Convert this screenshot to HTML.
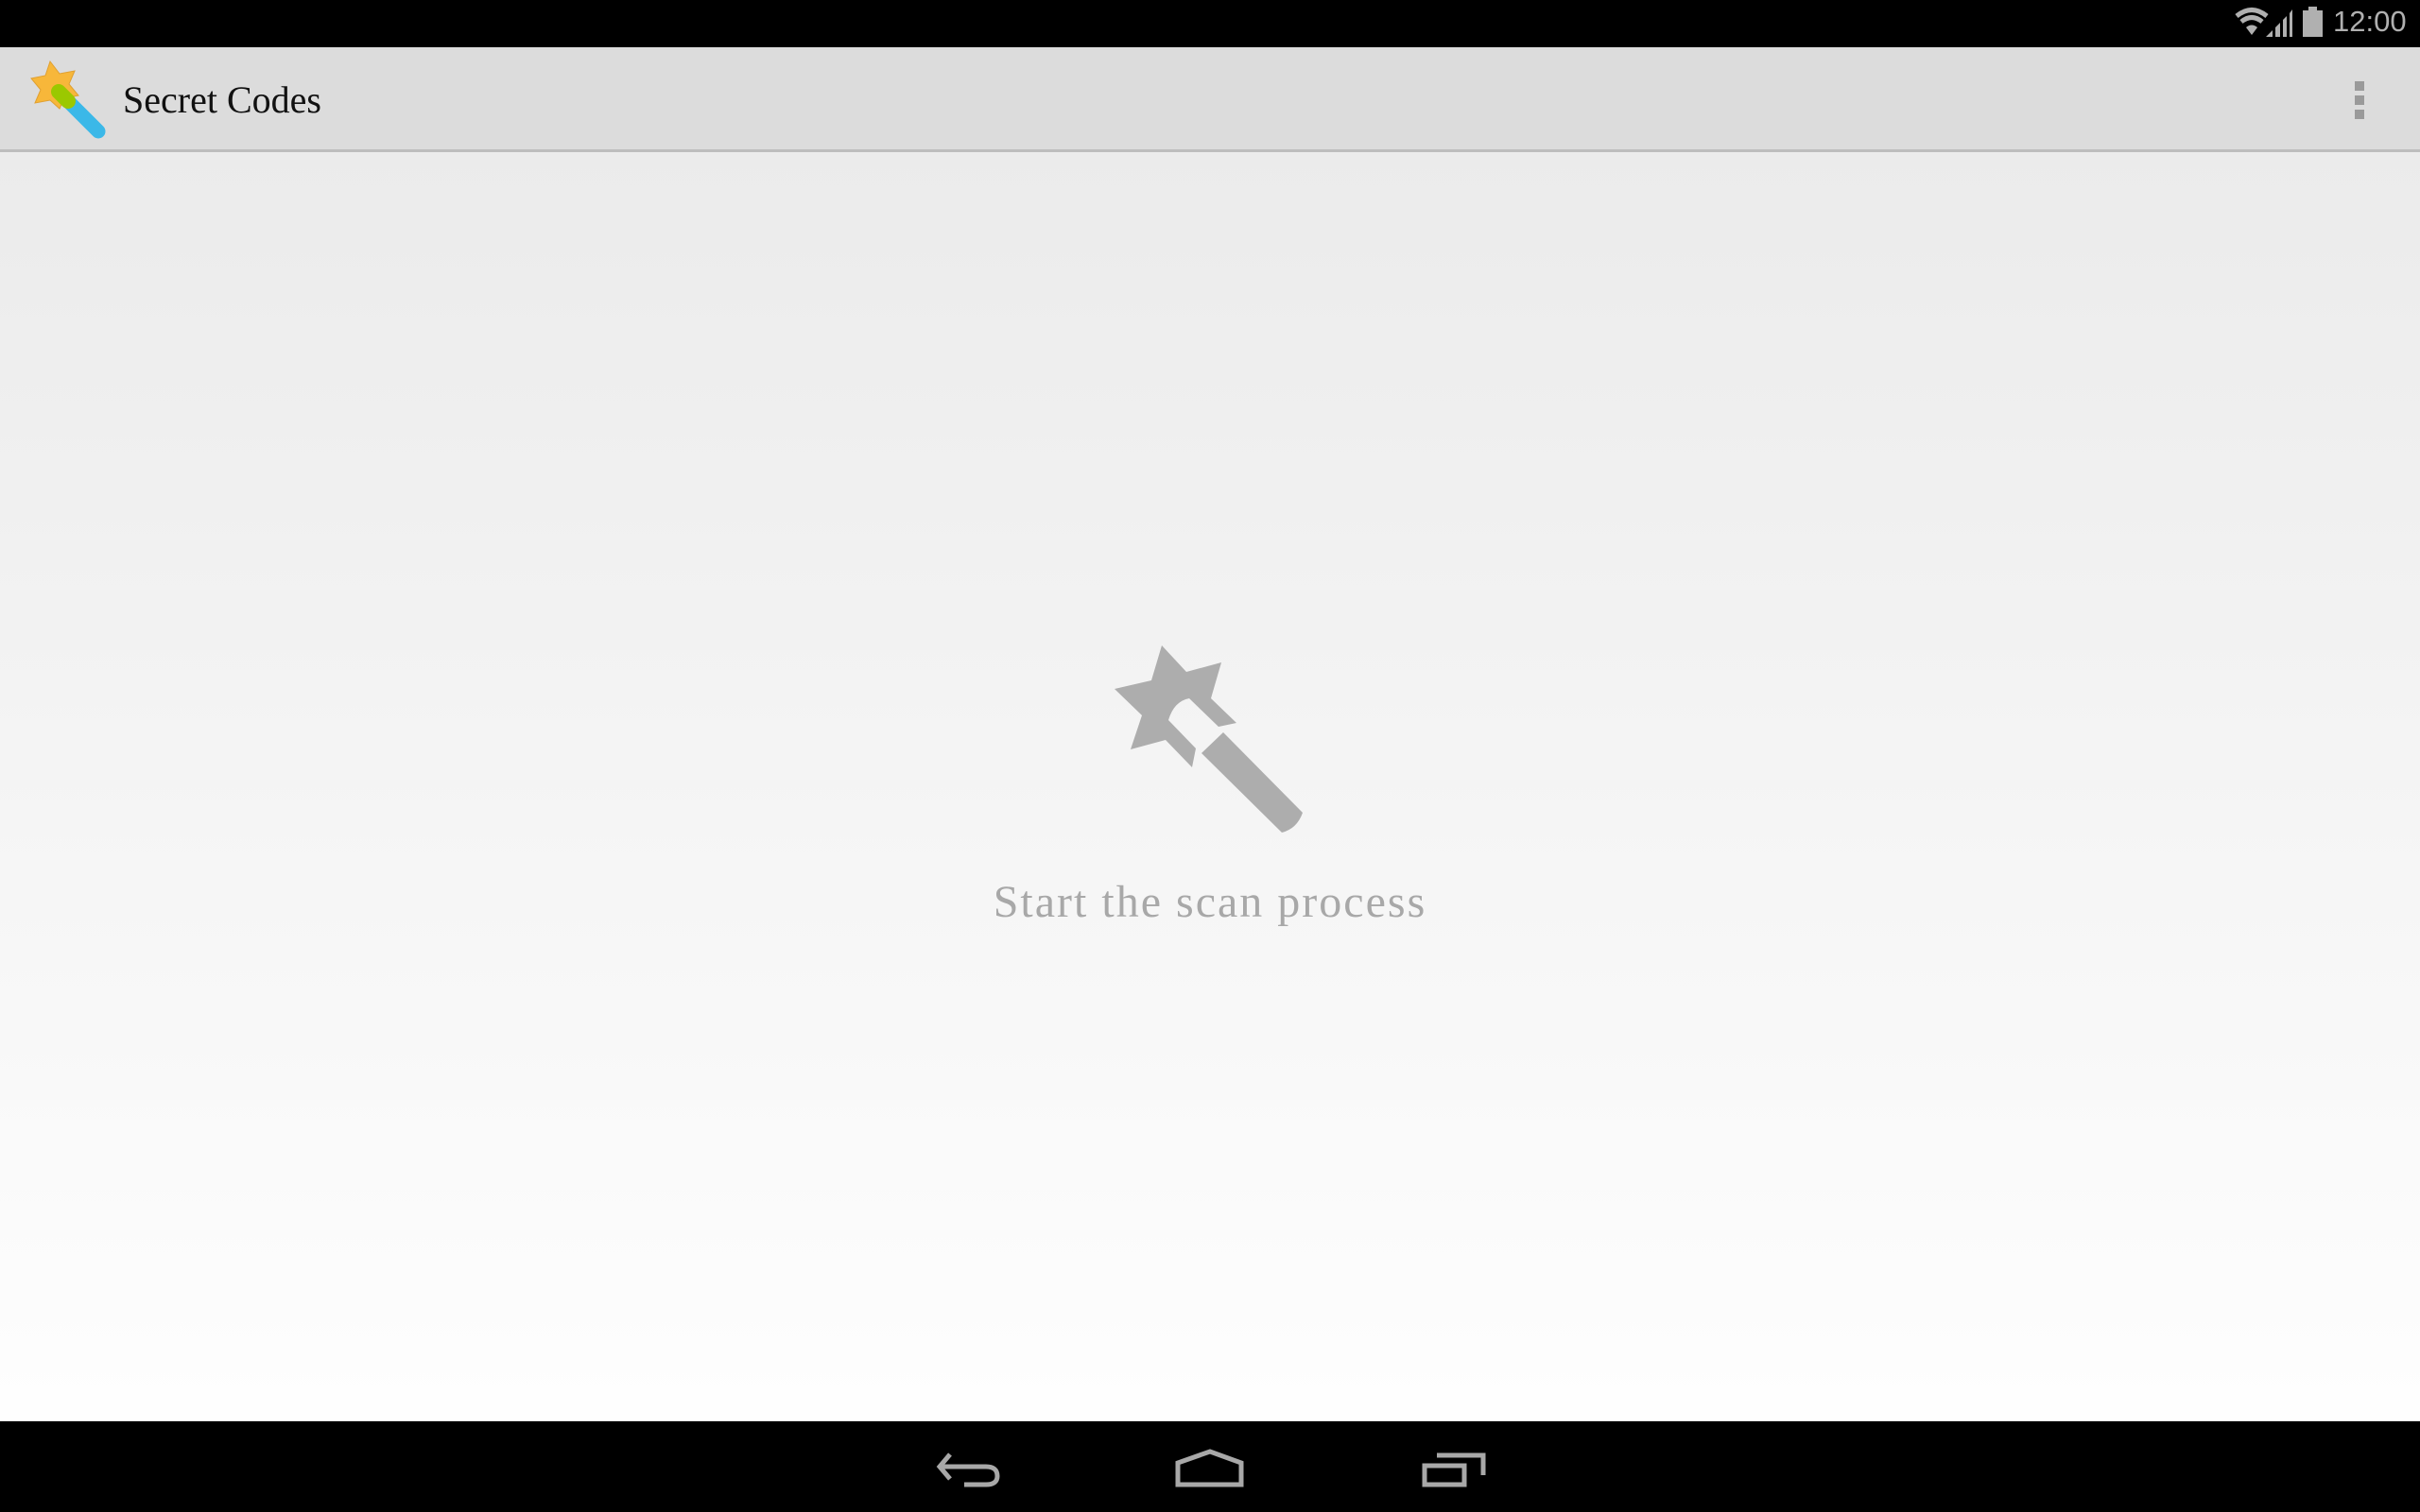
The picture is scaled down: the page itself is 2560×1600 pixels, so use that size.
<!DOCTYPE html>
<html><head><meta charset="utf-8"><style>
html,body{margin:0;padding:0;width:2560px;height:1600px;overflow:hidden;font-family:"Liberation Serif",serif}
#sb{position:absolute;left:0;top:0;width:2560px;height:50px;background:#000}
#ab{position:absolute;left:0;top:50px;width:2560px;height:111px;background:#dcdcdc;border-bottom:3px solid #bdbdbd;box-sizing:border-box}
#main{position:absolute;left:0;top:161px;width:2560px;height:1343px;background:linear-gradient(#ebebeb,#fefefe)}
#nb{position:absolute;left:0;top:1504px;width:2560px;height:96px;background:#000}
.t{position:absolute;left:130px;top:80px;font-size:40px;color:#111;line-height:50px}
.msg{position:absolute;left:0;width:2560px;top:927px;text-align:center;font-size:48px;letter-spacing:2px;color:#a8a8a8}
.clk{position:absolute;left:2468px;top:5px;font-family:"Liberation Sans",sans-serif;font-size:31px;color:#b0b0b0}
</style></head><body>
<div id="sb">
<svg width="2560" height="50" style="position:absolute;left:0;top:0">
<g fill="none" stroke="#b0b0b0" stroke-width="5">
<path d="M2366 17 Q2382 4 2398 17"/><path d="M2371 23 Q2382 14 2393 23"/>
</g>
<path d="M2376 29 Q2382 24 2388 29 L2382 37 Z" fill="#b0b0b0"/>
<path d="M2397 39 L2404 32 L2404 39 Z M2407 39 L2407 29 L2412 24 L2412 39 Z M2415 39 L2415 21 L2419 17 L2419 39 Z M2422 39 L2422 14 L2425 10 L2425 39 Z" fill="#b0b0b0"/>
<rect x="2436" y="11" width="21" height="28" fill="#b0b0b0"/><rect x="2442" y="7" width="9" height="4" fill="#b0b0b0"/>
</svg>
<div class="clk">12:00</div>
</div>
<div id="ab">
<div class="t" style="top:31px">Secret Codes</div>
<svg width="20" height="50" style="position:absolute;left:2488px;top:36px"><rect x="3" y="0" width="10" height="10" fill="#9a9a9a"/><rect x="3" y="15" width="10" height="10" fill="#9a9a9a"/><rect x="3" y="30" width="10" height="10" fill="#9a9a9a"/></svg>
</div>
<div id="main"></div>
<svg width="2560" height="1600" style="position:absolute;left:0;top:0">
<polygon points="53,65 63,78 79,75 73,89 83,101 68,104 63,115 53,106 37,109 43,95 33,83 48,80" fill="#f7b73a" stroke="#e0a030" stroke-width="1"/>
<line x1="63" y1="98" x2="104" y2="139" stroke="#3bb8e8" stroke-width="15" stroke-linecap="round"/>
<line x1="62" y1="97" x2="72" y2="107" stroke="#9bc800" stroke-width="16" stroke-linecap="round"/>
<path d="M1229 683 L1255 711 L1292 701 L1281 739 L1308 765 L1289 769 L1258 739 Q1242 742 1236 762 L1265 792 L1261 812 L1233 783 L1196 793 L1208 757 L1179 729 L1218 720 Z" fill="#adadad"/>
<path d="M1271 797 L1294 775 L1378 860 Q1372 877 1356 881 Z" fill="#adadad"/>
</svg>
<div class="msg">Start the scan process</div>
<div id="nb">
<svg width="2560" height="96" style="position:absolute;left:0;top:0" fill="none" stroke="#a8a8a8" stroke-width="5">
<path d="M1005 35 L994 48 L1005 61 M994 48 L1043 48 Q1055 48 1055 58 Q1055 67 1043 67 L1020 67"/>
<path d="M1246 67 L1246 44 L1280 32 L1313 44 L1313 67 Z"/>
<path d="M1507 47 L1549 47 L1549 67 L1507 67 Z M1520 36 L1569 36 L1569 57"/>
</svg>
</div>
</body></html>
